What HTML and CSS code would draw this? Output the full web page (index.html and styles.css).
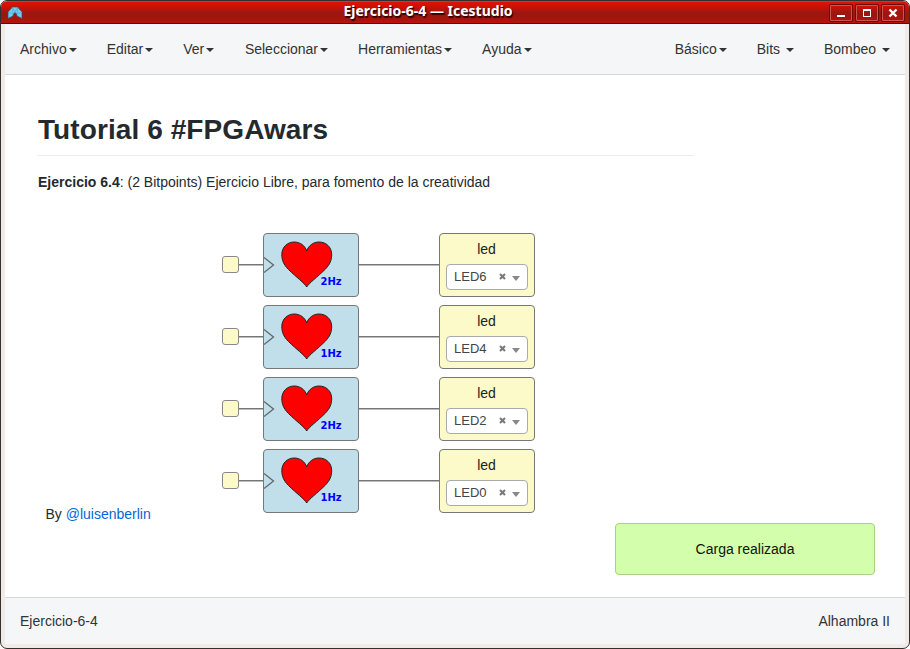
FILE: index.html
```html
<!DOCTYPE html>
<html lang="es">
<head>
<meta charset="utf-8">
<title>Ejercicio-6-4 — Icestudio</title>
<link rel="stylesheet" href="styles.css">
</head>
<body>
<svg class="defs" aria-hidden="true">
  <symbol id="heart" viewBox="0 0 52 48"><path d="M25.700 46 C23.500 42 15 36 7.500 28.500 C2.500 23.500 .8 19 .8 13.500 C.8 6 6.500 1 13.300 1 C19 1 24 4.500 25.700 10 C27.500 4.500 32.500 1 38 1 C45 1 50.700 6 50.700 13.500 C50.700 19 49 23.500 44 28.500 C36.500 36 28 42 25.700 46 Z" fill="#f00" stroke="#222" stroke-width="1"/></symbol>
  <symbol id="clear" viewBox="0 0 7 7"><path d="M1 1 L6 6 M6 1 L1 6" stroke="#777" stroke-width="2"/></symbol>
</svg>
<div class="window">
  <header class="titlebar">
    <svg class="logo" width="16" height="14" viewBox="0 0 16 14"><path d="M1 6 L5.500 1 L10.500 1 L15 6 V12.500 L10 10 L9.500 8 L8 6.500 L6.500 8 L6 10 L1 12.500 Z" fill="#72cdf0" stroke="#34515e" stroke-width=".7"/><path d="M1 6 L6 8 L5.500 1.500 L8 6 L10.500 1.500 L10 8 L15 6" fill="none" stroke="#4ba4ca" stroke-width=".6"/></svg>
    <h1 class="title">Ejercicio-6-4 — Icestudio</h1>
    <div class="controls">
      <span class="control"><svg width="22" height="16"><path d="M7 10h8v2H7z" fill="#fff"/></svg></span>
      <span class="control"><svg width="22" height="16"><path d="M7 4h8v8H7zM8 6v5h6V6z" fill="#fff" fill-rule="evenodd"/></svg></span>
      <span class="control"><svg width="22" height="16"><path d="M7.500 4.500 L14.500 11.500 M14.500 4.500 L7.500 11.500" stroke="#fff" stroke-width="2.400"/></svg></span>
    </div>
  </header>
  <div class="content">
    <nav class="menu">
      <a class="item">Archivo<i class="caret"></i></a>
      <a class="item">Editar<i class="caret"></i></a>
      <a class="item">Ver<i class="caret"></i></a>
      <a class="item kern">Seleccionar<i class="caret"></i></a>
      <a class="item">Herramientas<i class="caret"></i></a>
      <a class="item">Ayuda<i class="caret"></i></a>
      <span class="spacer"></span>
      <a class="item">Básico<i class="caret"></i></a>
      <a class="item">Bits&nbsp;<i class="caret"></i></a>
      <a class="item">Bombeo&nbsp;<i class="caret"></i></a>
    </nav>
    <main class="canvas">
      <section class="info">
        <h2 class="heading">Tutorial 6 #FPGAwars</h2>
        <p class="text"><b>Ejercicio 6.4</b>: (2 Bitpoints) Ejercicio Libre, para fomento de la creatividad</p>
      </section>
      <div class="circuit">
        <div class="row"><span class="input"></span><span class="wire short"></span>
          <div class="block"><svg class="clock" width="11" height="16"><path d="M0 .5 L9.500 8 L0 15.500"/></svg><svg class="heart" width="52" height="48"><use href="#heart"/></svg><span class="freq">2Hz</span></div>
          <span class="wire long"></span>
          <div class="led"><span>led</span><div class="select"><span class="value">LED6</span><svg class="clear" width="7" height="7"><use href="#clear"/></svg><i class="arrow"></i></div></div></div>
        <div class="row"><span class="input"></span><span class="wire short"></span>
          <div class="block"><svg class="clock" width="11" height="16"><path d="M0 .5 L9.500 8 L0 15.500"/></svg><svg class="heart" width="52" height="48"><use href="#heart"/></svg><span class="freq">1Hz</span></div>
          <span class="wire long"></span>
          <div class="led"><span>led</span><div class="select"><span class="value">LED4</span><svg class="clear" width="7" height="7"><use href="#clear"/></svg><i class="arrow"></i></div></div></div>
        <div class="row"><span class="input"></span><span class="wire short"></span>
          <div class="block"><svg class="clock" width="11" height="16"><path d="M0 .5 L9.500 8 L0 15.500"/></svg><svg class="heart" width="52" height="48"><use href="#heart"/></svg><span class="freq">2Hz</span></div>
          <span class="wire long"></span>
          <div class="led"><span>led</span><div class="select"><span class="value">LED2</span><svg class="clear" width="7" height="7"><use href="#clear"/></svg><i class="arrow"></i></div></div></div>
        <div class="row"><span class="input"></span><span class="wire short"></span>
          <div class="block"><svg class="clock" width="11" height="16"><path d="M0 .5 L9.500 8 L0 15.500"/></svg><svg class="heart" width="52" height="48"><use href="#heart"/></svg><span class="freq">1Hz</span></div>
          <span class="wire long"></span>
          <div class="led"><span>led</span><div class="select"><span class="value">LED0</span><svg class="clear" width="7" height="7"><use href="#clear"/></svg><i class="arrow"></i></div></div></div>
      </div>
      <p class="author">By <a class="link">@luisenberlin</a></p>
      <div class="toast">Carga realizada</div>
    </main>
    <footer class="status"><span>Ejercicio-6-4</span><span>Alhambra II</span></footer>
  </div>
</div>
</body>
</html>
```
FILE: styles.css
```css
* { box-sizing: border-box; }
body {
  margin: 0;
  height: 649px;
  overflow: hidden;
  background: #fff;
  font: 14px/20px "Liberation Sans", Arial, sans-serif;
  color: #333;
}
.defs { display: none; }
svg { display: block; }
.window {
  height: 649px;
  display: flex;
  flex-direction: column;
  border: 1px solid #333030;
  border-radius: 7px;
  overflow: hidden;
  background: #f0ebe6;
}
.titlebar {
  height: 23px;
  flex: none;
  display: grid;
  grid-template-columns: 26px 1fr 80px;
  align-items: center;
  background: linear-gradient(#f04a3e 0, #e01208 1px, #d20f06 5px, #991811 12px, #a5140d 17px, #b8140b 22px);
  border-bottom: 1px solid #52100c;
}
.logo { margin: 1px 0 0 6px; }
.title {
  margin: -2px 0 0;
  text-align: center;
  font: bold 14px/20px "Noto Sans", "Open Sans", sans-serif;
  color: #fff;
  text-shadow: 1px 1px 1px #300, 1px 2px 1px #400;
}
.controls { display: flex; justify-content: flex-end; gap: 4px; padding: 1px 5px 0 0; }
.control {
  width: 22px;
  height: 16px;
  display: block;
  border: 1px solid #c8574e;
  border-radius: 1px;
  box-shadow: 0 0 0 1px #6b0e09;
}
.control svg { margin: -1px; }
.content {
  flex: 1;
  display: flex;
  flex-direction: column;
  margin: 0 4px 4px;
  background: #fff;
}
.menu { display: flex; height: 51px; background: #f5f6f8; border-bottom: 1px solid #d5d8da; }
.item { display: flex; align-items: center; padding: 0 15px; white-space: pre; }
.kern { padding-left: 15.600px; }
.spacer { flex: 1; }
.caret {
  margin: 2px 0 0 2px;
  border: 4px solid transparent;
  border-top-color: #333;
  border-bottom: 0;
}
.canvas { position: relative; flex: 1; }
.info { width: 656px; margin-left: 33px; padding-top: 37px; color: #24292e; }
.heading {
  margin: 0 0 16px;
  padding-bottom: 8px;
  font-size: 28px;
  line-height: 35px;
  letter-spacing: .09px;
  border-bottom: 1px solid #eaecef;
}
.text { margin: 0; }
.circuit { display: grid; gap: 8px; margin: 41px 0 0 217px; width: 313px; }
.row { display: flex; align-items: center; height: 64px; }
.input { width: 17px; height: 17px; margin-bottom: 1px; border: 1px solid #888; border-radius: 3px; background: #fcfac9; }
.wire { height: 2px; margin-bottom: 1px; background: linear-gradient(#777 1px, #bbb 1px); }
.short { width: 24px; }
.long { width: 80px; }
.block, .led { width: 96px; height: 64px; border: 1px solid #777; border-radius: 4px; }
.block { position: relative; background: #c0dfeb; }
.clock { position: absolute; left: 0; top: 23px; }
.clock path { fill: none; stroke: #666; stroke-width: 1.300; }
.heart { position: absolute; left: 17px; top: 7px; }
.freq {
  position: absolute;
  left: 56.500px;
  top: 41px;
  font: bold 10px/14px "DejaVu Sans", sans-serif;
  color: #00f;
}
.led {
  display: flex;
  flex-direction: column;
  align-items: center;
  padding-top: 5px;
  background: #fcfac9;
  color: #222;
}
.led > span { margin-right: 1px; }
.select {
  display: flex;
  align-items: center;
  width: 82px;
  height: 26px;
  margin-top: 5px;
  padding-left: 7px;
  background: #fff;
  border: 1px solid #aaa;
  border-radius: 4px;
  font-size: 13px;
  color: #444;
}
.value { width: 45px; line-height: 24px; }
.clear { margin-bottom: 2px; }
.arrow { margin: 3px 0 0 6px; border: 4px solid transparent; border-top: 5px solid #888; border-bottom: 0; }
.author { position: absolute; left: 40.500px; top: 429px; margin: 0; color: #24292e; }
.link { color: #0366d6; }
.toast {
  position: absolute;
  right: 30px;
  bottom: 22px;
  width: 260px;
  height: 52px;
  line-height: 50px;
  text-align: center;
  color: #111;
  background: #d3ffad;
  border: 1px solid #a9d085;
  border-radius: 4px;
}
.status {
  display: flex;
  justify-content: space-between;
  height: 47px;
  padding: 13px 15px 0;
  background: #f5f6f8;
  border-top: 1px solid #d5d8da;
}
```
